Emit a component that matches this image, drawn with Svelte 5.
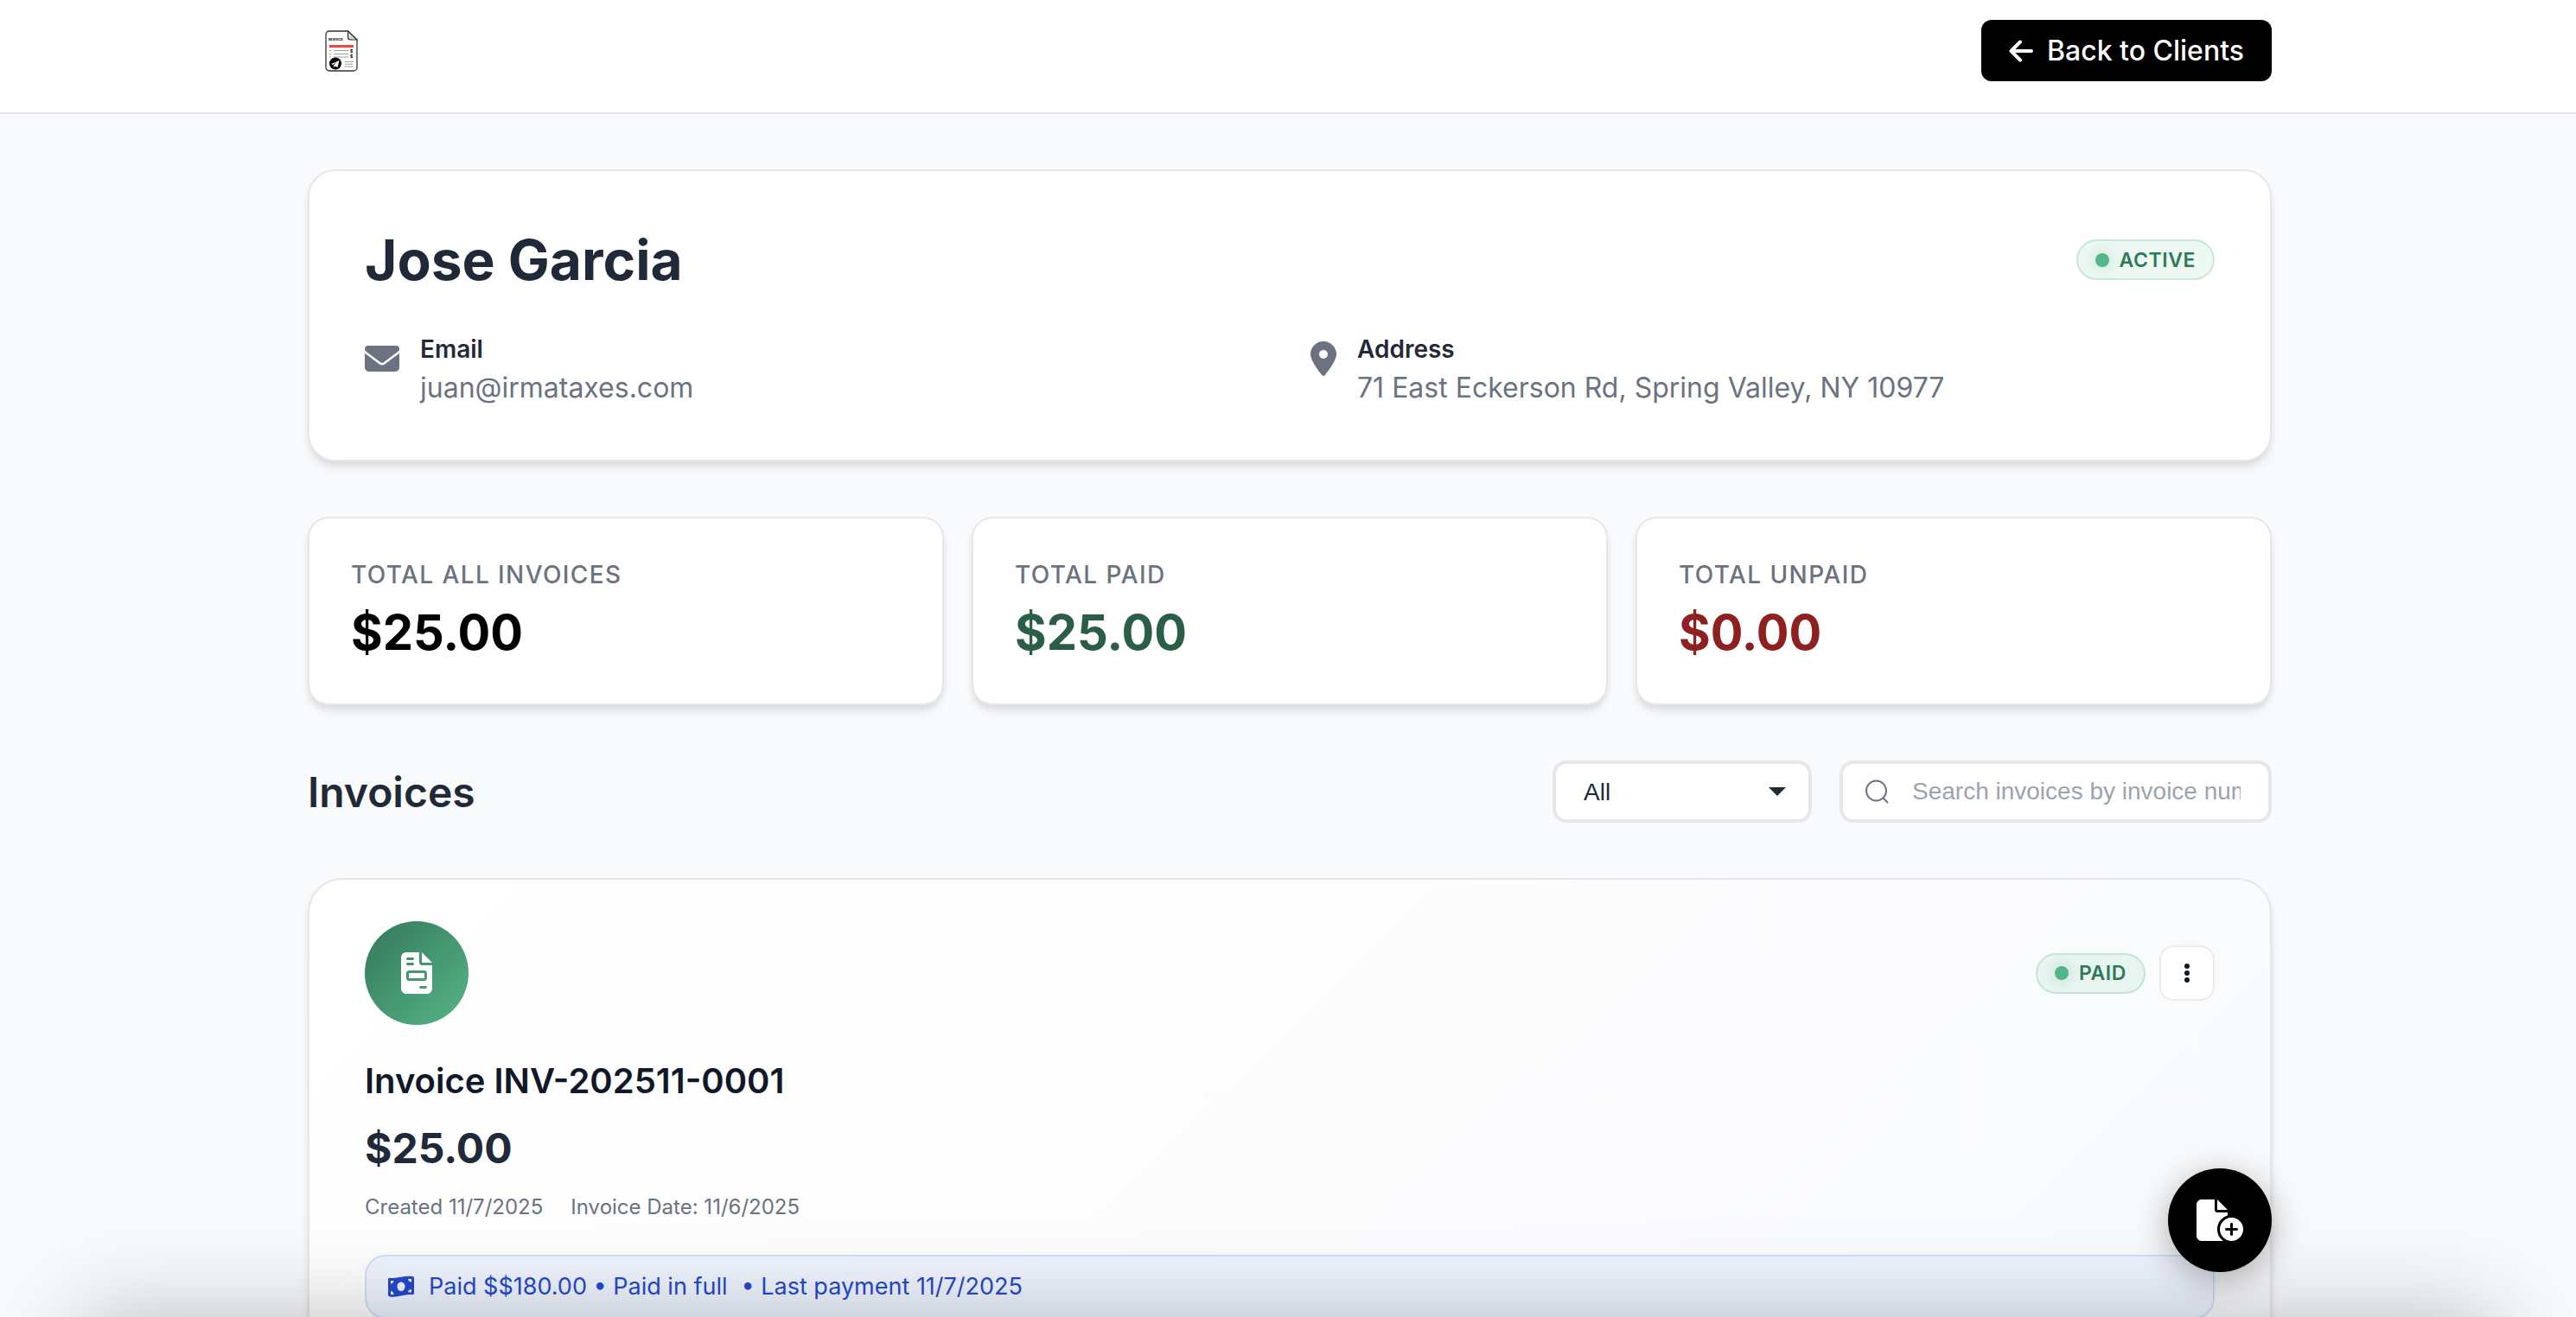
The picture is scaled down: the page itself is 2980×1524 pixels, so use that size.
<script lang="ts">
  interface Stat {
    label: string;
    value: string;
    tone: string;
  }

  const client = {
    name: 'Jose Garcia',
    status: 'Active',
    email: 'juan@irmataxes.com',
    address: '71 East Eckerson Rd, Spring Valley, NY 10977'
  };

  const stats: Stat[] = [
    { label: 'Total all invoices', value: '$25.00', tone: 'all' },
    { label: 'Total paid', value: '$25.00', tone: 'paid' },
    { label: 'Total unpaid', value: '$0.00', tone: 'unpaid' }
  ];

  const invoices = [
    {
      number: 'INV-202511-0001',
      amount: '$25.00',
      status: 'Paid',
      created: '11/7/2025',
      date: '11/6/2025',
      paid: '$$180.00',
      lastPayment: '11/7/2025'
    }
  ];

  let filter = $state('all');
  let search = $state('');

  const visible = $derived(
    invoices.filter(
      (inv) =>
        (filter === 'all' || inv.status.toLowerCase() === filter) &&
        inv.number.toLowerCase().includes(search.toLowerCase())
    )
  );
</script>

<div class="page">
  <header class="topbar">
    <div class="container topbar-inner">
      <a class="logo" href="/" aria-label="Home">
        <svg viewBox="0 0 38 48" width="38" height="48" aria-hidden="true">
          <path d="M5 1h21.500l10.500 10v32a4 4 0 0 1-4 4H5a4 4 0 0 1-4-4V5a4 4 0 0 1 4-4z" fill="#fff" stroke="#333" stroke-width="1.300" />
          <path d="M26.500 1v7a3 3 0 0 0 3 3H37z" fill="#d8d8dc" stroke="#333" stroke-width="1.200" />
          <text x="4" y="12" font-size="4" font-weight="700">INVOICE</text>
          <path d="M5 17h28v3H5z" fill="#f2453d" />
          <path d="M5 23.500h2M10 23.500h17M5 27.500h2M10 27.500h17M5 31h2M10 31h17M22.500 36.500H33M22.500 42H33" stroke="#999" stroke-width="0.900" />
          <path d="M23.500 39.200h8" stroke="#777" stroke-width="1" stroke-dasharray="2 1" />
          <text x="29" y="25.500" font-size="5" font-weight="700">$</text>
          <text x="29" y="32" font-size="5" font-weight="700">$</text>
          <circle cx="12" cy="38.500" r="7" fill="#000" />
          <path d="M7 39l9.500-4-2 8-3-1.500-1.500 1.500v-2.500l4-4-5 3.500z" fill="#fff" />
        </svg>
      </a>
      <a class="back" href="/clients">
        <svg viewBox="0 0 28 32" width="28" height="32" aria-hidden="true">
          <path d="M26 16H2.500M13 5.500L2.500 16 13 26.500" fill="none" stroke="#fff" stroke-width="4" stroke-linecap="round" stroke-linejoin="round" />
        </svg>
        Back to Clients
      </a>
    </div>
  </header>

  <main class="container">
    <section class="card client">
      <div class="client-head">
        <h1>{client.name}</h1>
        <span class="badge"><span class="dot"></span>{client.status}</span>
      </div>
      <div class="client-info">
        <div class="info">
          <svg viewBox="0 0 512 512" width="40" height="40" aria-hidden="true">
            <path d="M48 64C21.500 64 0 85.500 0 112c0 15.100 7.100 29.300 19.200 38.400L236.800 313.600c11.400 8.500 27 8.500 38.400 0L492.800 150.400c12.100-9.100 19.200-23.300 19.200-38.400c0-26.500-21.500-48-48-48H48zM0 176V384c0 35.300 28.700 64 64 64H448c35.300 0 64-28.700 64-64V176L294.400 339.200c-22.800 17.100-54 17.100-76.800 0L0 176z" />
          </svg>
          <div>
            <div class="info-label">Email</div>
            <div class="info-value">{client.email}</div>
          </div>
        </div>
        <div class="info">
          <svg viewBox="0 0 384 512" width="30" height="40" aria-hidden="true">
            <path d="M215.700 499.200C267 435 384 279.400 384 192C384 86 298 0 192 0S0 86 0 192c0 87.400 117 243 168.300 307.200c12.300 15.300 35.100 15.300 47.400 0zM192 128a64 64 0 1 1 0 128 64 64 0 1 1 0-128z" />
          </svg>
          <div>
            <div class="info-label">Address</div>
            <div class="info-value">{client.address}</div>
          </div>
        </div>
      </div>
    </section>

    <section class="stats">
      {#each stats as stat}
        <div class="card stat">
          <div class="stat-label">{stat.label}</div>
          <div class="stat-value {stat.tone}">{stat.value}</div>
        </div>
      {/each}
    </section>

    <div class="toolbar">
      <h2>Invoices</h2>
      <div class="controls">
        <div class="filter">
          <select bind:value={filter} aria-label="Filter invoices">
            <option value="all">All</option>
            <option value="paid">Paid</option>
            <option value="unpaid">Unpaid</option>
          </select>
          <svg viewBox="0 0 20 10" width="20" height="10" aria-hidden="true">
            <path d="M0 0h20L10 10z" />
          </svg>
        </div>
        <div class="search">
          <svg viewBox="0 0 28 28" width="28" height="28" aria-hidden="true">
            <circle cx="12.500" cy="13" r="11.500" />
            <path d="M20.500 21.500l5 5" />
          </svg>
          <input
            type="text"
            bind:value={search}
            aria-label="Search invoices"
            placeholder="Search invoices by invoice number"
          />
        </div>
      </div>
    </div>

    {#each visible as inv}
      <article class="card invoice">
        <div class="invoice-head">
          <div class="invoice-icon">
            <svg viewBox="0 0 384 512" width="36" height="48" aria-hidden="true">
              <path d="M64 0C28.700 0 0 28.700 0 64V448c0 35.300 28.700 64 64 64H320c35.300 0 64-28.700 64-64V160H256c-17.700 0-32-14.300-32-32V0H64zM256 0V128H384L256 0zM80 64h64c8.800 0 16 7.200 16 16s-7.200 16-16 16H80c-8.800 0-16-7.200-16-16s7.200-16 16-16zm0 64h64c8.800 0 16 7.200 16 16s-7.200 16-16 16H80c-8.800 0-16-7.200-16-16s7.200-16 16-16zm16 96H288c17.700 0 32 14.300 32 32v64c0 17.700-14.300 32-32 32H96c-17.700 0-32-14.300-32-32V256c0-17.700 14.300-32 32-32zm0 32v64H288V256H96zM240 416h64c8.800 0 16 7.200 16 16s-7.200 16-16 16H240c-8.800 0-16-7.200-16-16s7.200-16 16-16z" />
            </svg>
          </div>
          <div class="invoice-actions">
            <span class="badge"><span class="dot"></span>{inv.status}</span>
            <button class="menu" type="button" aria-label="Invoice actions">
              <svg viewBox="0 0 8 24" width="8" height="24" aria-hidden="true">
                <circle cx="4" cy="4" r="3" />
                <circle cx="4" cy="12" r="3" />
                <circle cx="4" cy="20" r="3" />
              </svg>
            </button>
          </div>
        </div>
        <h3>Invoice {inv.number}</h3>
        <div class="amount">{inv.amount}</div>
        <div class="meta">
          <span>Created {inv.created}</span>
          <span>Invoice Date: {inv.date}</span>
        </div>
        <div class="payment">
          <svg viewBox="0 0 32 26" width="32" height="26" aria-hidden="true">
            <path fill-rule="evenodd" d="M1 4.500Q1 2.500 3 2.700C12 4 19 0 29 1Q31 1.200 31 3V20.500Q31 22.500 29 22.300C20 21 13 26 3 24.500Q1 24.200 1 22.500zM16 7.500c-2.500 0-4.500 2.300-4.500 5.300s2 5.300 4.500 5.300 4.500-2.300 4.500-5.300-2-5.300-4.500-5.300zM4 6v3.500Q7 9.300 7.500 6zM4 22q4 0 3.500-0.500Q7 18 4 18zM28 4q-3-0.500-4 0 .5 3.500 4 3.500zM28 19.500v-3.500q-3.500 0-4 3.300z" />
          </svg>
          <span>Paid {inv.paid} • Paid in full</span>
          <span>• Last payment {inv.lastPayment}</span>
        </div>
      </article>
    {/each}
  </main>

  <button class="fab" type="button" aria-label="New invoice">
    <svg viewBox="0 0 576 512" width="54" height="48" aria-hidden="true">
      <path d="M0 64C0 28.700 28.700 0 64 0H224V128c0 17.700 14.300 32 32 32H384v38.600C310.100 219.500 256 287.400 256 368c0 59.100 29.100 111.300 73.700 143.300c-3.200 .5-6.400 .7-9.700 .7H64c-35.300 0-64-28.700-64-64V64zm384 64H256V0L384 128zm48 96a144 144 0 1 1 0 288 144 144 0 1 1 0-288zm16 80c0-8.800-7.200-16-16-16s-16 7.200-16 16v48H368c-8.800 0-16 7.200-16 16s7.200 16 16 16h48v48c0 8.800 7.200 16 16 16s16-7.200 16-16V384h48c8.800 0 16-7.200 16-16s-7.200-16-16-16H448V304z" />
    </svg>
  </button>

  <!-- Closed bottom sheet, only its shadow reaches the window -->
  <div class="sheet"></div>
</div>

<style>
  :global(body) {
    margin: 0;
    background: #f9fafc;
  }

  .page {
    height: 100vh;
    overflow-y: auto;
    scrollbar-width: none;
    background: #f9fafc;
    color: #1f2937;
    font-family: Inter, 'Liberation Sans', sans-serif;
  }

  .page * {
    box-sizing: border-box;
  }

  h1,
  h2,
  h3 {
    margin: 0;
  }

  .container {
    max-width: 2400px;
    margin: 0 auto;
    padding: 0 62px 0 66px;
  }

  .topbar {
    background: #fff;
    border-bottom: 2px solid #e5e7eb;
  }

  .topbar-inner {
    display: flex;
    justify-content: space-between;
    align-items: center;
    padding-top: 23px;
    padding-bottom: 36px;
  }

  .logo {
    display: flex;
    padding-left: 20px;
  }

  .back {
    display: flex;
    align-items: center;
    gap: 16px;
    padding: 16px 32px;
    border-radius: 12px;
    background: #000;
    color: #fff;
    font-size: 32px;
    font-weight: 500;
    text-decoration: none;
  }

  .card {
    background: #fff;
    border: 2px solid #e5e7eb;
    box-shadow: 0 8px 12px -2px rgba(0, 0, 0, 0.1), 0 4px 8px -2px rgba(0, 0, 0, 0.06);
  }

  .client {
    margin-top: 64px;
    padding: 64px;
    border-radius: 32px;
  }

  .client-head {
    display: flex;
    justify-content: space-between;
    align-items: center;
    margin-bottom: 48px;
  }

  h1 {
    font-size: 64px;
    line-height: 77px;
    font-weight: 700;
  }

  .badge {
    display: inline-flex;
    align-items: center;
    gap: 12px;
    height: 47px;
    padding: 0 20px;
    border: 2px solid rgba(82, 183, 136, 0.25);
    border-radius: 24px;
    background: rgba(82, 183, 136, 0.1);
    color: #2d7a5a;
    font-size: 23px;
    font-weight: 600;
    letter-spacing: 0.025em;
    text-transform: uppercase;
  }

  .dot {
    width: 16px;
    height: 16px;
    border-radius: 50%;
    background: #52b788;
    box-shadow: 0 0 16px rgba(82, 183, 136, 0.4);
  }

  .client-info {
    display: grid;
    grid-template-columns: 1fr 1fr;
    gap: 48px;
  }

  .info {
    display: flex;
    align-items: flex-start;
    gap: 24px;
  }

  .info svg {
    margin-top: 8px;
    fill: #6b7280;
  }

  .info-label {
    margin-bottom: 8px;
    font-size: 28px;
    line-height: 34px;
    font-weight: 600;
  }

  .info-value {
    color: #6b7280;
    font-size: 32px;
    line-height: 39px;
  }

  .stats {
    display: grid;
    grid-template-columns: repeat(3, 1fr);
    gap: 32px;
    margin-top: 64px;
  }

  .stat {
    padding: 48px;
    border-radius: 24px;
  }

  .stat-label {
    margin-bottom: 16px;
    color: #6b7280;
    font-size: 28px;
    line-height: 34px;
    font-weight: 500;
    letter-spacing: 0.05em;
    text-transform: uppercase;
  }

  .stat-value {
    color: #000;
    font-size: 56px;
    line-height: 68px;
    font-weight: 700;
  }

  .stat-value.paid {
    color: #2a5e46;
  }

  .stat-value.unpaid {
    color: #8f2020;
  }

  .toolbar {
    display: flex;
    justify-content: space-between;
    align-items: center;
    margin: 64px 0;
  }

  h2 {
    font-size: 48px;
    font-weight: 600;
  }

  .controls {
    display: flex;
    align-items: center;
    gap: 32px;
  }

  .filter,
  .search {
    position: relative;
  }

  select,
  input {
    display: block;
    width: 100%;
    height: 72px;
    border: 4px solid #e5e7eb;
    border-radius: 16px;
    background: #fff;
    color: #1f2937;
    font-family: 'Liberation Sans', Arial, sans-serif;
    font-size: 28px;
  }

  .filter {
    width: 300px;
  }

  select {
    appearance: none;
    padding: 0 64px 0 32px;
  }

  .filter svg {
    position: absolute;
    top: 31px;
    right: 30px;
    fill: #1f2937;
    pointer-events: none;
  }

  .search {
    width: 500px;
  }

  .search svg {
    position: absolute;
    top: 22px;
    left: 30px;
    fill: none;
    stroke: #6b7280;
    stroke-width: 2;
    stroke-linecap: round;
  }

  input {
    padding: 0 32px 0 80px;
  }

  input::placeholder {
    color: #9ca3af;
    opacity: 1;
  }

  .invoice {
    padding: 48px 64px;
    border-radius: 40px;
    background: linear-gradient(135deg, #fff 0%, #f9fafc 100%);
  }

  .invoice-head {
    display: flex;
    justify-content: space-between;
    align-items: center;
    margin-bottom: 40px;
  }

  .invoice-icon {
    display: flex;
    align-items: center;
    justify-content: center;
    width: 120px;
    height: 120px;
    border-radius: 50%;
    background: linear-gradient(135deg, #35785a 0%, #55b587 100%);
  }

  .invoice-icon svg,
  .fab svg {
    fill: #fff;
  }

  .invoice-actions {
    display: flex;
    align-items: center;
    gap: 16px;
  }

  .menu {
    display: flex;
    align-items: center;
    justify-content: center;
    width: 64px;
    height: 64px;
    padding: 0;
    border: 2px solid #ebebeb;
    border-radius: 16px;
    background: #fff;
    cursor: pointer;
  }

  .menu svg {
    fill: #111827;
  }

  h3 {
    color: #111827;
    font-size: 40px;
    line-height: 50px;
    font-weight: 600;
  }

  .amount {
    margin-top: 24px;
    font-size: 48px;
    line-height: 58px;
    font-weight: 700;
  }

  .meta {
    display: flex;
    gap: 32px;
    margin-top: 24px;
    color: #6b7280;
    font-size: 24px;
    line-height: 30px;
  }

  .payment {
    display: flex;
    align-items: center;
    gap: 16px;
    margin-top: 40px;
    padding: 16px 24px;
    border: 2px solid #cfdffb;
    border-radius: 24px;
    background: #eff4fe;
    color: #2549cf;
    font-size: 27px;
    line-height: 38px;
  }

  .payment svg {
    fill: #2549cf;
  }

  .fab {
    position: fixed;
    right: calc(50% - 1138px);
    bottom: 52px;
    display: flex;
    align-items: center;
    justify-content: center;
    width: 120px;
    height: 120px;
    padding: 0;
    border: none;
    border-radius: 50%;
    background: #000;
    box-shadow: 0 8px 40px rgba(0, 0, 0, 0.3);
    cursor: pointer;
  }

  .sheet {
    position: fixed;
    top: 100%;
    left: 92px;
    right: 92px;
    height: 400px;
    box-shadow: 0 0 100px rgba(0, 0, 0, 0.25);
  }
</style>
